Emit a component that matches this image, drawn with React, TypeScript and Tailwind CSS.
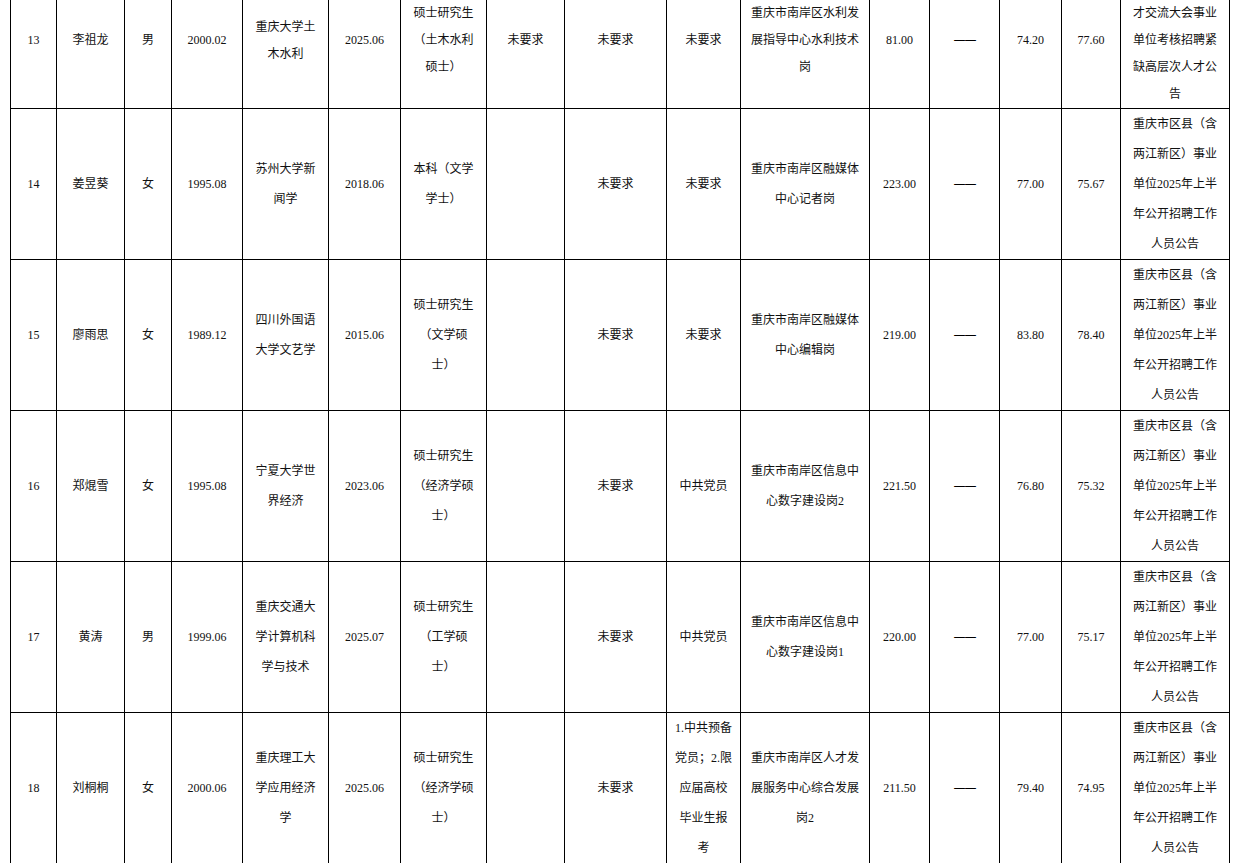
const notice = ['重庆市区县（含', '两江新区）事业', '单位2025年上半', '年公开招聘工作', '人员公告']

type Row = {
  lines: string[][]
  first?: boolean
}

// row 13 is partly scrolled out of view at the top; its first notice line sits above the page
const rows: Row[] = [
  {
    first: true,
    lines: [
      ['13'],
      ['李祖龙'],
      ['男'],
      ['2000.02'],
      ['重庆大学土', '木水利'],
      ['2025.06'],
      ['硕士研究生', '（土木水利', '硕士）'],
      ['未要求'],
      ['未要求'],
      ['未要求'],
      ['重庆市南岸区水利发', '展指导中心水利技术', '岗'],
      ['81.00'],
      ['——'],
      ['74.20'],
      ['77.60'],
      ['', '才交流大会事业', '单位考核招聘紧', '缺高层次人才公', '告'],
    ],
  },
  {
    lines: [
      ['14'],
      ['姜昱葵'],
      ['女'],
      ['1995.08'],
      ['苏州大学新', '闻学'],
      ['2018.06'],
      ['本科（文学', '学士）'],
      [],
      ['未要求'],
      ['未要求'],
      ['重庆市南岸区融媒体', '中心记者岗'],
      ['223.00'],
      ['——'],
      ['77.00'],
      ['75.67'],
      notice,
    ],
  },
  {
    lines: [
      ['15'],
      ['廖雨思'],
      ['女'],
      ['1989.12'],
      ['四川外国语', '大学文艺学'],
      ['2015.06'],
      ['硕士研究生', '（文学硕', '士）'],
      [],
      ['未要求'],
      ['未要求'],
      ['重庆市南岸区融媒体', '中心编辑岗'],
      ['219.00'],
      ['——'],
      ['83.80'],
      ['78.40'],
      notice,
    ],
  },
  {
    lines: [
      ['16'],
      ['郑焜雪'],
      ['女'],
      ['1995.08'],
      ['宁夏大学世', '界经济'],
      ['2023.06'],
      ['硕士研究生', '（经济学硕', '士）'],
      [],
      ['未要求'],
      ['中共党员'],
      ['重庆市南岸区信息中', '心数字建设岗2'],
      ['221.50'],
      ['——'],
      ['76.80'],
      ['75.32'],
      notice,
    ],
  },
  {
    lines: [
      ['17'],
      ['黄涛'],
      ['男'],
      ['1999.06'],
      ['重庆交通大', '学计算机科', '学与技术'],
      ['2025.07'],
      ['硕士研究生', '（工学硕', '士）'],
      [],
      ['未要求'],
      ['中共党员'],
      ['重庆市南岸区信息中', '心数字建设岗1'],
      ['220.00'],
      ['——'],
      ['77.00'],
      ['75.17'],
      notice,
    ],
  },
  {
    lines: [
      ['18'],
      ['刘桐桐'],
      ['女'],
      ['2000.06'],
      ['重庆理工大', '学应用经济', '学'],
      ['2025.06'],
      ['硕士研究生', '（经济学硕', '士）'],
      [],
      ['未要求'],
      ['1.中共预备', '党员；2.限', '应届高校', '毕业生报', '考'],
      ['重庆市南岸区人才发', '展服务中心综合发展', '岗2'],
      ['211.50'],
      ['——'],
      ['79.40'],
      ['74.95'],
      notice,
    ],
  },
]

export default function App() {
  return (
    <div className="min-h-screen bg-white overflow-hidden">
      <div
        className="ml-[10px] -mt-[28px] w-[1220px] grid grid-cols-[45px_67px_46px_70px_85px_71px_85px_77px_101px_73px_128px_59px_69px_61px_58px_108px] gap-px p-px bg-black text-[12px] text-[#111]"
        style={{ fontFamily: '"Liberation Serif", "Noto Sans CJK SC", serif' }}
      >
        {rows.map((row, r) =>
          row.lines.map((cell, c) => (
            <div
              key={`${r}-${c}`}
              className={`bg-white flex flex-col items-center justify-center text-center whitespace-nowrap ${
                row.first ? 'h-[135px] leading-[27px]' : 'h-[150px] leading-[30px]'
              }`}
            >
              {cell.map((line, i) =>
                line === '——' ? (
                  <div key={i} className="font-['DejaVu_Sans',sans-serif] text-black tracking-[-1px]">
                    {line}
                  </div>
                ) : (
                  <div key={i} className={row.first ? 'min-h-[27px]' : 'min-h-[30px]'}>
                    {line}
                  </div>
                )
              )}
            </div>
          ))
        )}
      </div>
    </div>
  )
}
